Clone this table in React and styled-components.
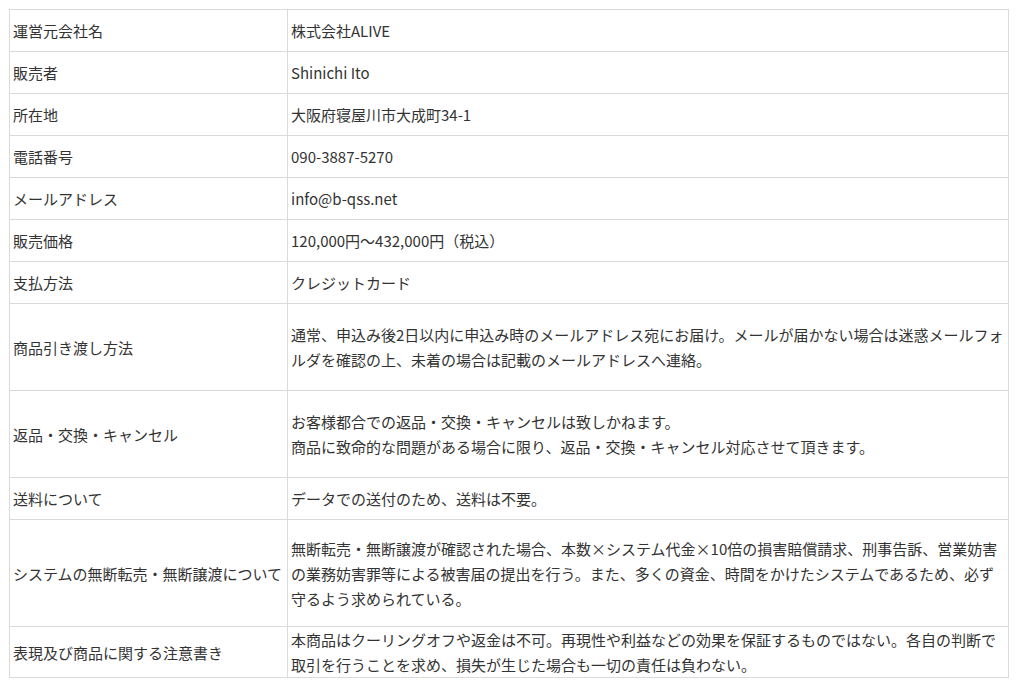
import React from 'react';
import styled, { createGlobalStyle } from 'styled-components';

const GlobalStyle = createGlobalStyle`
  body {
    margin: 0;
    padding: 0;
    background: #fff;
  }
`

const Page = styled.div`
  padding: 9px 0 0 9px;
  font-family: "Noto Sans CJK JP", "Noto Sans", sans-serif;
  font-size: 15px;
  color: #333;
`

const InfoTable = styled.table`
  width: 1000px;
  border-collapse: collapse;
  table-layout: fixed;
`

const Row = styled.tr`
  height: ${p => p.$h || 42}px;
`

const Label = styled.td`
  width: 271px;
  border: 1px solid #dadada;
  padding: 0 3px;
  line-height: 25px;
  vertical-align: middle;
  white-space: nowrap;
`

const Value = styled.td`
  border: 1px solid #dadada;
  padding: 0 3px;
  line-height: 25px;
  vertical-align: middle;
  white-space: nowrap;
`

const rows = [
  { label: '運営元会社名', lines: ['株式会社ALIVE'] },
  { label: '販売者', lines: ['Shinichi Ito'] },
  { label: '所在地', lines: ['大阪府寝屋川市大成町34-1'] },
  { label: '電話番号', lines: ['090-3887-5270'] },
  { label: 'メールアドレス', lines: ['info@b-qss.net'] },
  { label: '販売価格', lines: ['120,000円～432,000円（税込）'] },
  { label: '支払方法', lines: ['クレジットカード'] },
  {
    label: '商品引き渡し方法',
    h: 87,
    lines: [
      '通常、申込み後2日以内に申込み時のメールアドレス宛にお届け。メールが届かない場合は迷惑メールフォ',
      'ルダを確認の上、未着の場合は記載のメールアドレスへ連絡。',
    ],
  },
  {
    label: '返品・交換・キャンセル',
    h: 87,
    lines: [
      'お客様都合での返品・交換・キャンセルは致しかねます。',
      '商品に致命的な問題がある場合に限り、返品・交換・キャンセル対応させて頂きます。',
    ],
  },
  { label: '送料について', lines: ['データでの送付のため、送料は不要。'] },
  {
    label: 'システムの無断転売・無断譲渡について',
    h: 107,
    lines: [
      '無断転売・無断譲渡が確認された場合、本数×システム代金×10倍の損害賠償請求、刑事告訴、営業妨害',
      'の業務妨害罪等による被害届の提出を行う。また、多くの資金、時間をかけたシステムであるため、必ず',
      '守るよう求められている。',
    ],
  },
  {
    label: '表現及び商品に関する注意書き',
    h: 50,
    lines: [
      '本商品はクーリングオフや返金は不可。再現性や利益などの効果を保証するものではない。各自の判断で',
      '取引を行うことを求め、損失が生じた場合も一切の責任は負わない。',
    ],
  },
]

export default function App() {
  return (
    <Page>
      <GlobalStyle />
      <InfoTable>
        <tbody>
          {rows.map((r) => (
            <Row key={r.label} $h={r.h}>
              <Label>{r.label}</Label>
              <Value>
                {r.lines.map((line, i) => (
                  <React.Fragment key={i}>
                    {i > 0 && <br />}
                    {line}
                  </React.Fragment>
                ))}
              </Value>
            </Row>
          ))}
        </tbody>
      </InfoTable>
    </Page>
  );
}
